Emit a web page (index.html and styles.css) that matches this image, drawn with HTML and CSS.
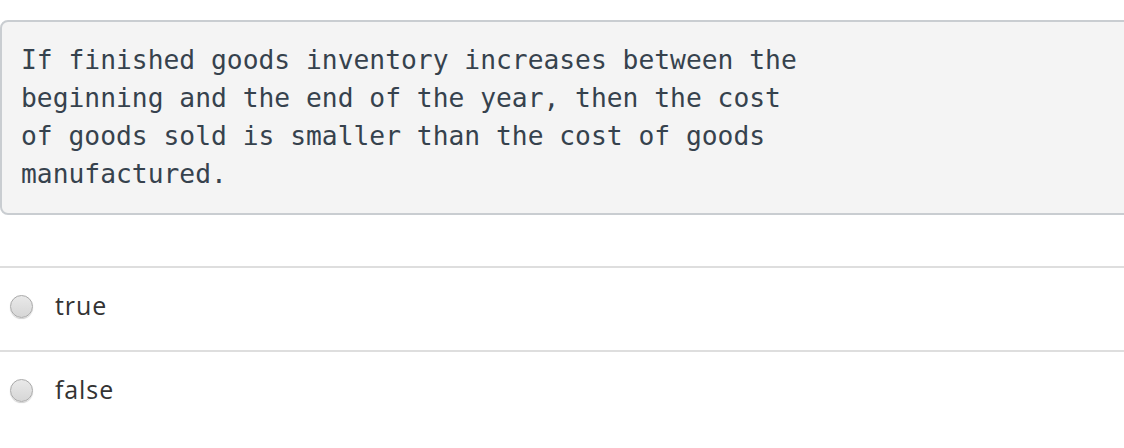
FILE: index.html
```html
<!DOCTYPE html>
<html>
<head>
<meta charset="utf-8">
<link rel="stylesheet" href="styles.css">
</head>
<body>
<div class="question">
  <p class="prompt">If finished goods inventory increases between the<br>beginning and the end of the year, then the cost<br>of goods sold is smaller than the cost of goods<br>manufactured.</p>
</div>
<ul class="choices">
  <li class="choice"><span class="radio"></span><span class="label">true</span></li>
  <li class="choice"><span class="radio"></span><span class="label">false</span></li>
</ul>
</body>
</html>
```
FILE: styles.css
```css
html, body {
  margin: 0;
  padding: 0;
  background: #ffffff;
  overflow: hidden;
}

body {
  width: 1124px;
  height: 448px;
}

.question {
  margin-top: 20px;
  margin-right: -20px;
  background: #f4f4f4;
  border: 2px solid #c9cdd1;
  border-radius: 8px;
  padding: 19px 18px 20px 19px;
}

.prompt {
  margin: 0;
  font-family: "DejaVu Sans Mono", monospace;
  font-size: 26.3px;
  line-height: 38px;
  color: #36424d;
}

.choices {
  list-style: none;
  margin: 51px 0 0 0;
  padding: 0;
}

.choice {
  border-top: 2px solid #dedede;
  height: 82px;
  display: flex;
  align-items: center;
  gap: 22px;
  padding-left: 10px;
}

.radio {
  width: 21px;
  height: 21px;
  border-radius: 50%;
  border: 1px solid #a9a9a9;
  background: linear-gradient(#e9e9e9, #d6d6d6);
  box-shadow: 0 1px 1px rgba(0,0,0,0.18);
  margin-top: -5px;
}

.label {
  font-family: "Open Sans", "Liberation Sans", sans-serif;
  font-size: 25px;
  letter-spacing: 0.9px;
  color: #333333;
  margin-top: -8px;
}
```
